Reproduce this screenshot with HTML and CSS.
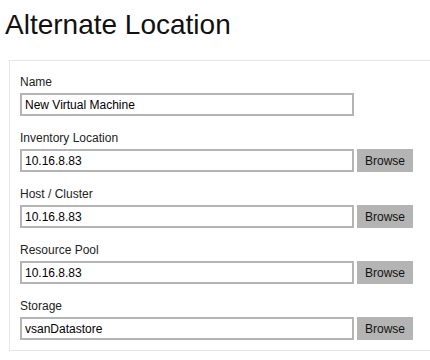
FILE: index.html
```html
<!DOCTYPE html>
<html>
<head>
<meta charset="utf-8">
<link rel="stylesheet" href="styles.css">
</head>
<body>
<h1 class="title">Alternate Location</h1>
<div class="panel">
  <div class="field">
    <label class="label">Name</label>
    <div class="row"><input class="box" type="text" value="New Virtual Machine"></div>
  </div>
  <div class="field">
    <label class="label">Inventory Location</label>
    <div class="row"><input class="box" type="text" value="10.16.8.83"><button class="browse">Browse</button></div>
  </div>
  <div class="field">
    <label class="label">Host / Cluster</label>
    <div class="row"><input class="box" type="text" value="10.16.8.83"><button class="browse">Browse</button></div>
  </div>
  <div class="field">
    <label class="label">Resource Pool</label>
    <div class="row"><input class="box" type="text" value="10.16.8.83"><button class="browse">Browse</button></div>
  </div>
  <div class="field">
    <label class="label">Storage</label>
    <div class="row"><input class="box" type="text" value="vsanDatastore"><button class="browse">Browse</button></div>
  </div>
</div>
</body>
</html>
```
FILE: styles.css
```css
html, body {
  margin: 0;
  padding: 0;
  background: #ffffff;
  font-family: "Liberation Sans", Arial, sans-serif;
  overflow: hidden;
}
.title {
  margin: 9px 0 19px 5px;
  font-size: 28px;
  font-weight: normal;
  line-height: 32px;
  color: #111111;
}
.panel {
  margin-left: 9px;
  border: 1px solid #e6e6e6;
  border-right: none;
  padding: 14px 0 10px 10px;
  display: flex;
  flex-direction: column;
  gap: 15px;
}
.field {
  display: flex;
  flex-direction: column;
  gap: 4px;
}
.label {
  font-size: 12px;
  line-height: 14px;
  color: #222222;
}
.row {
  display: flex;
  gap: 3px;
  height: 23px;
}
.box {
  box-sizing: border-box;
  width: 334px;
  height: 23px;
  margin: 0;
  border: 2px solid #b4b4b4;
  padding: 0 3px;
  font-family: "Liberation Sans", Arial, sans-serif;
  font-size: 12px;
  color: #000000;
  background: #ffffff;
  outline: none;
}
.browse {
  box-sizing: border-box;
  width: 56px;
  height: 23px;
  margin: 0;
  border: none;
  padding: 0;
  background: #b4b4b4;
  font-family: "Liberation Sans", Arial, sans-serif;
  font-size: 12px;
  color: #111111;
}
```
